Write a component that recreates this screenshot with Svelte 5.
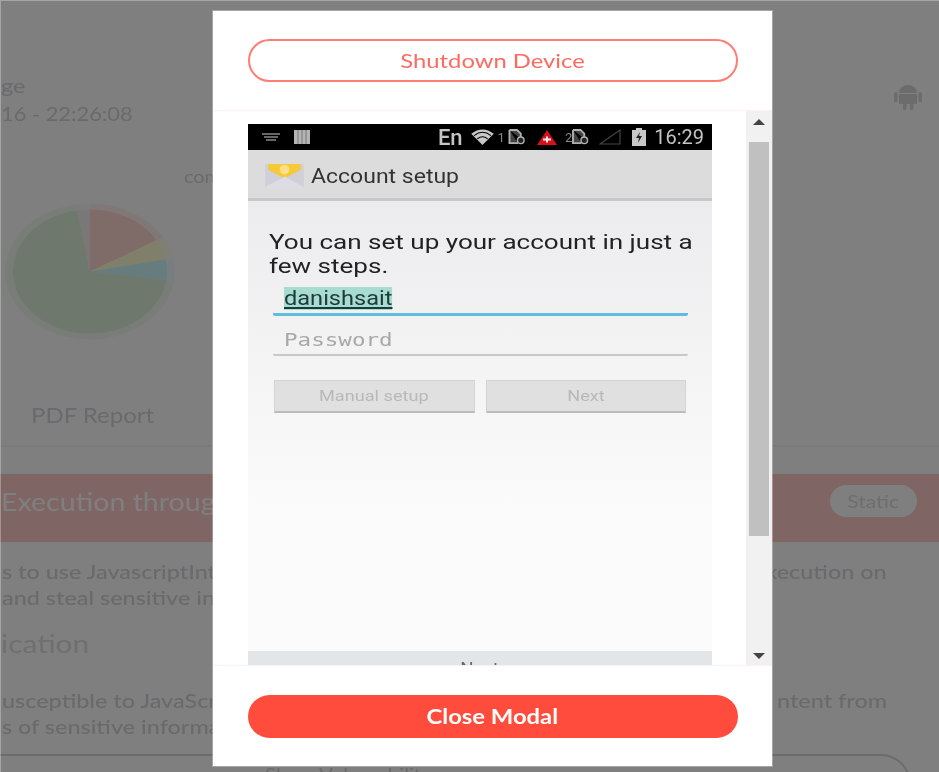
<script lang="ts">
  // Pie chart is stretched in the source, hence separate radii
  const cx = 90;
  const cy = 271.5;
  const slices = [
    { fill: '#ffd8d2', ex: 66, ey: -31, from: [0, -1] },
    { fill: '#ffffd4', ex: 75, ey: -12, from: [66, -31] },
    { fill: '#cef8ff', ex: 77, ey: 9, from: [75, -12] },
    { fill: '#dcf0d8', ex: -13, ey: -60, from: [77, 9], large: true },
    { fill: '#f2eeee', ex: 0, ey: -1, from: [-13, -60] }
  ];

  function point(x: number, y: number, rx: number, ry: number) {
    const a = Math.atan2(y / 62, x / 77);
    return `${(cx + Math.cos(a) * rx).toFixed(1)} ${(cy + Math.sin(a) * ry).toFixed(1)}`;
  }

  function wedge(s: any, rx: number, ry: number) {
    const start = point(s.from[0], s.from[1], rx, ry);
    const end = point(s.ex, s.ey, rx, ry);
    return `M${cx} ${cy}L${start}A${rx} ${ry} 0 ${s.large ? 1 : 0} 1 ${end}Z`;
  }
</script>

<div class="screen">
  <!-- Dimmed report page behind the modal -->
  <div class="page">
    <div class="head">
      <div class="head-text">
        <div class="title"><span class="wide">ge</span></div>
        <div class="stamp"><span class="wide">16 - 22:26:08</span></div>
      </div>
      <svg class="android" viewBox="0 0 28 25" width="28" height="25">
        <path d="M5 8a9 8 0 0 1 18 0z" />
        <rect x="5" y="9" width="18" height="10" rx="1" />
        <rect x="0" y="7" width="3.5" height="10" rx="1.5" />
        <rect x="24.5" y="7" width="3.5" height="10" rx="1.5" />
        <rect x="9" y="18" width="3.5" height="7" rx="1.5" />
        <rect x="16" y="18" width="3.5" height="7" rx="1.5" />
      </svg>
    </div>

    <section class="chart">
      <div class="chart-label"><span class="wide">compliance</span></div>
      <svg class="pie" viewBox="0 203 178 138" width="178" height="138">
        {#each slices as s}
          <path d={wedge(s, 85, 68)} fill={s.fill} opacity="0.35" />
        {/each}
        {#each slices as s}
          <path d={wedge(s, 77, 62)} fill={s.fill} />
        {/each}
      </svg>
      <div class="pdf"><span class="wide">PDF Report</span></div>
    </section>

    <div class="band">
      <span class="band-title wide">Execution through</span>
      <span class="pill"><span class="wide mid">Static</span></span>
    </div>

    <div class="row first">
      <span class="wide">s to use JavascriptInterface</span>
      <span class="wide end">xecution on</span>
    </div>
    <div class="row"><span class="wide">and steal sensitive information</span></div>
    <h3 class="sub"><span class="wide">ication</span></h3>
    <div class="row second">
      <span class="wide">usceptible to JavaScript</span>
      <span class="wide end">ntent from</span>
    </div>
    <div class="row"><span class="wide">s of sensitive information</span></div>

    <div class="vuln"><span class="wide">Show Vulnerability</span></div>
  </div>

  <div class="backdrop"></div>

  <div class="modal">
    <header class="modal-head">
      <button class="outline"><span class="wide mid btn-text">Shutdown Device</span></button>
    </header>

    <div class="modal-body">
      <div class="shot-wrap">
        <div class="shot">
          <div class="status">
            <svg width="18" height="8" viewBox="0 0 18 8" class="st-left">
              <path d="M0 1h18M2 4h14M4 7h10" stroke="#888" stroke-width="1.5" />
            </svg>
            <svg width="16" height="14" viewBox="0 0 16 14">
              <path d="M0 0h16v14H0z" fill="#b4b4b4" />
              <path d="M4 0v14M8 0v14M12 0v14" stroke="#777" stroke-width="1" />
            </svg>
            <span class="en">En</span>
            <svg class="wifi" width="23" height="16" viewBox="0 0 24 17">
              <path d="M12 17 0 5Q12-4 24 5z" fill="#c8c8c8" />
              <path d="M3 7Q12 0 21 7M6.5 10.5Q12 6 17.500 10.500" stroke="#000" stroke-width="1.200" fill="none" />
            </svg>
            <span class="sim-no">1</span>
            <svg class="sim" width="18" height="16" viewBox="0 0 18 17">
              <path d="M1 1h8l4 4v5M1 1v14h9" stroke="#b0b0b0" stroke-width="2" fill="#444" />
              <circle cx="13" cy="12" r="3.500" stroke="#b0b0b0" stroke-width="1.500" fill="#222" />
            </svg>
            <svg class="alert" width="20" height="15" viewBox="0 0 20 15">
              <path d="M10 0 20 15H0z" fill="#d8101c" />
              <path d="M6 9.500h8M10 6.500v6" stroke="#eee" stroke-width="2" />
            </svg>
            <span class="sim-no two">2</span>
            <svg class="sim two" width="17" height="16" viewBox="0 0 18 17">
              <path d="M1 1h8l4 4v5M1 1v14h9" stroke="#b0b0b0" stroke-width="2" fill="#444" />
              <circle cx="13" cy="12" r="3.500" stroke="#b0b0b0" stroke-width="1.500" fill="#222" />
            </svg>
            <svg class="signal" width="22" height="16" viewBox="0 0 22 16">
              <path d="M21 1v14H1z" stroke="#444" stroke-width="1.200" fill="none" />
            </svg>
            <svg class="battery" width="14" height="18" viewBox="0 0 14 18">
              <path d="M4 0h6v2h4v16H0V2h4z" fill="#c8c8c8" />
              <path d="M8 4 4 10h3l-1 5 4-7H7z" fill="#222" />
            </svg>
            <span class="clock">16:29</span>
          </div>

          <div class="action">
            <svg class="mail" width="39" height="27" viewBox="0 0 40 28">
              <rect x="0" y="2" width="40" height="26" rx="2" fill="#cfd0d8" />
              <path d="M3 2h34v6L20 17 3 8z" fill="#f6c937" />
              <circle cx="20" cy="8" r="5" fill="#fbe089" />
              <path d="M0 26 20 15l20 11v2H0z" fill="#dcdce2" />
            </svg>
            <span class="wide a">Account setup</span>
          </div>

          <div class="screen-body">
            <p class="intro">You can set up your account in just a few steps.</p>
            <div class="field active"><span class="selected wide a">danishsait</span></div>
            <div class="field"><span class="placeholder">Password</span></div>
            <div class="btns">
              <div class="fake-btn"><span class="wide mid">Manual setup</span></div>
              <div class="fake-btn"><span class="wide mid">Next</span></div>
            </div>
          </div>

          <div class="bottom-bar"><span class="wide mid">Next</span></div>
        </div>
      </div>

      <div class="scrollbar">
        <span class="arrow up"></span>
        <span class="thumb"></span>
        <span class="arrow down"></span>
      </div>
    </div>

    <footer class="modal-foot">
      <button class="solid"><span class="wide mid btn-text">Close Modal</span></button>
    </footer>
  </div>
</div>

<style>
  :global(body) {
    margin: 0;
    background: #fff;
  }

  .screen {
    position: relative;
    width: 939px;
    height: 772px;
    overflow: hidden;
    font-family: Lato, "Open Sans", sans-serif;
    filter: blur(0.45px);
  }

  /* The source screenshot is stretched sideways; text follows it */
  .wide {
    display: inline-block;
    transform: scaleX(1.17);
    transform-origin: left center;
    white-space: nowrap;
  }

  .wide.mid {
    transform-origin: center;
  }

  .wide.end {
    transform-origin: right center;
  }

  .wide.a {
    transform: scaleX(1.15);
  }

  .wide.btn-text {
    transform: scaleX(1.19);
  }

  /* Background page */
  .page {
    height: 772px;
    box-sizing: border-box;
    padding-top: 71px;
    overflow: hidden;
    background: #fff;
    color: #d4d4d8;
  }

  .head {
    display: flex;
    justify-content: space-between;
    align-items: flex-start;
    height: 59px;
    padding: 0 17px 0 1px;
  }

  .title {
    font-size: 20px;
    line-height: 29px;
  }

  .stamp {
    font-size: 18.700px;
    line-height: 29px;
  }

  .android {
    margin-top: 14px;
    fill: #d8d8d8;
  }

  .chart {
    height: 317px;
    box-sizing: border-box;
    padding-top: 35px;
    border-bottom: 2px solid #f6f6f6;
  }

  .chart-label {
    margin-left: 184px;
    font-size: 17px;
    line-height: 24px;
  }

  .pie {
    display: block;
    margin-top: 14px;
  }

  .pdf {
    margin: 60px 0 0 31px;
    font-size: 20.500px;
    line-height: 28px;
  }

  .band {
    display: flex;
    justify-content: space-between;
    align-items: center;
    height: 68px;
    margin-top: 27px;
    padding: 0 22px 0 1px;
    background: #ffcac6;
    color: #fff;
  }

  .band-title {
    font-size: 24.400px;
    margin-bottom: 14px;
  }

  .pill {
    display: flex;
    align-items: center;
    justify-content: center;
    width: 87px;
    height: 32px;
    margin-bottom: 15px;
    border-radius: 16px;
    background: #fff;
    color: #dcdcdc;
    font-size: 18px;
  }

  .row {
    display: flex;
    justify-content: space-between;
    padding: 0 52px 0 2px;
    font-size: 20px;
    line-height: 26px;
    font-weight: 500;
  }

  .row.first {
    margin-top: 16px;
  }

  .row.second {
    margin-top: 27px;
  }

  .sub {
    margin: 16px 0 0 1px;
    font-size: 25.600px;
    font-weight: 400;
    line-height: 34px;
    color: #dedee0;
  }

  .vuln {
    height: 60px;
    box-sizing: border-box;
    width: 911px;
    margin-top: 15px;
    padding: 8px 0 0 265px;
    border: 2px solid #d8d8d8;
    border-left: 0;
    border-radius: 0 30px 30px 0;
    font-size: 17.500px;
    line-height: 21px;
  }

  .backdrop {
    position: absolute;
    inset: 0;
    background: rgba(0, 0, 0, 0.5);
    border: 1px solid rgba(255, 255, 255, 0.3);
    border-right: 0;
    border-bottom: 0;
  }

  /* Modal */
  .modal {
    position: absolute;
    top: 11px;
    left: 213px;
    width: 559px;
    height: 755px;
    display: flex;
    flex-direction: column;
    background: #fff;
    box-shadow: 0 0 0 1px rgba(255, 255, 255, 0.3);
  }

  .modal-head {
    height: 100px;
    flex: none;
    box-sizing: border-box;
    padding-top: 28px;
    border-bottom: 1px solid #fff0ef;
  }

  .modal-foot {
    height: 101px;
    flex: none;
    box-sizing: border-box;
    padding-top: 29px;
    border-top: 1px solid #fff0ef;
  }

  button {
    display: block;
    width: 490px;
    height: 43px;
    margin-left: 35px;
    border-radius: 22px;
    font-family: inherit;
    font-size: 20px;
    padding: 0 2px 2px 0;
  }

  .outline {
    background: #fff;
    border: 2px solid #ff7d75;
    color: #ff6a60;
  }

  .solid {
    background: #ff4c3d;
    border: 0;
    color: #fff;
    font-weight: 700;
  }

  .modal-body {
    flex: 1;
    min-height: 0;
    display: flex;
    overflow: hidden;
  }

  .shot-wrap {
    flex: 1;
    padding: 13px 0 0 35px;
    overflow: hidden;
  }

  .shot {
    width: 464px;
    font-family: Roboto, "Liberation Sans", sans-serif;
  }

  .status {
    display: flex;
    align-items: center;
    height: 26px;
    background: #000;
    color: #c4c4c4;
    padding: 0 8px 0 14px;
  }

  .st-left {
    margin-right: 14px;
  }

  .en {
    margin-left: auto;
    font-size: 22px;
    font-weight: 500;
  }

  .wifi {
    margin-left: 8px;
  }

  .sim-no {
    margin-left: 4px;
    font-size: 13px;
    color: #888;
  }

  .sim {
    margin-left: 3px;
  }

  .sim.two {
    margin-left: 0;
  }

  .sim-no.two {
    margin-left: 8px;
  }

  .alert {
    margin-left: 11px;
  }

  .signal {
    margin-left: 10px;
  }

  .battery {
    margin-left: 11px;
  }

  .clock {
    margin-left: 8px;
    font-size: 20px;
  }

  .action {
    display: flex;
    align-items: center;
    padding: 3px 0 0 17px;
    height: 45px;
    background: #dcdcdc;
    border-bottom: 3px solid #c8c8c8;
    color: #333;
    font-size: 20px;
  }

  .mail {
    margin-right: 7px;
  }

  .screen-body {
    height: 450px;
    box-sizing: border-box;
    padding: 29px 26px 0 21px;
    background: linear-gradient(#ececee, #fbfbfb 70%);
  }

  .intro {
    margin: 0;
    width: 345px;
    font-size: 21px;
    line-height: 24px;
    color: #222;
    transform: scaleX(1.24);
    transform-origin: left center;
  }

  .field {
    margin: 0 0 0 4px;
    width: 415px;
    box-sizing: border-box;
    padding-left: 11px;
    display: flex;
    align-items: flex-end;
    border-radius: 0 0 2px 2px;
  }

  .field + .field {
    height: 40px;
    padding-bottom: 4px;
    border-bottom: 2px solid #c8c8c8;
  }

  .field.active {
    height: 38px;
    border-bottom: 3px solid #5fbde0;
  }

  .selected {
    background: #a8dcd0;
    color: #1c3a3a;
    font-size: 20.500px;
    line-height: 23px;
    text-decoration: underline;
    margin-bottom: 3px;
  }

  .placeholder {
    display: inline-block;
    font-family: "DejaVu Sans Mono", monospace;
    font-size: 18.500px;
    color: #a8a8a8;
    transform: scaleX(1.22);
    transform-origin: left center;
  }

  .btns {
    display: flex;
    gap: 11px;
    margin: 24px 0 0 5px;
    width: 412px;
  }

  .fake-btn {
    flex: 1;
    height: 33px;
    box-sizing: border-box;
    display: flex;
    align-items: center;
    justify-content: center;
    background: #e0e0e0;
    border: 1px solid #d4d4d4;
    border-bottom: 2px solid #bcbcbc;
    color: #b8b8b8;
    font-size: 15.500px;
  }

  .bottom-bar {
    height: 40px;
    padding-top: 9px;
    box-sizing: border-box;
    background: #e2e6e8;
    text-align: center;
    color: #666;
    font-size: 16px;
    line-height: 18px;
  }

  .scrollbar {
    flex: none;
    width: 26px;
    display: flex;
    flex-direction: column;
    align-items: center;
    background: #f1f1f1;
  }

  .arrow {
    flex: none;
    width: 0;
    height: 0;
    border-left: 6px solid transparent;
    border-right: 6px solid transparent;
  }

  .arrow.up {
    margin-top: 8px;
    border-bottom: 6px solid #444;
  }

  .arrow.down {
    margin-top: 117px;
    border-top: 6px solid #444;
  }

  .thumb {
    flex: none;
    width: 20px;
    height: 394px;
    margin-top: 17px;
    background: #c0c0c0;
  }
</style>
